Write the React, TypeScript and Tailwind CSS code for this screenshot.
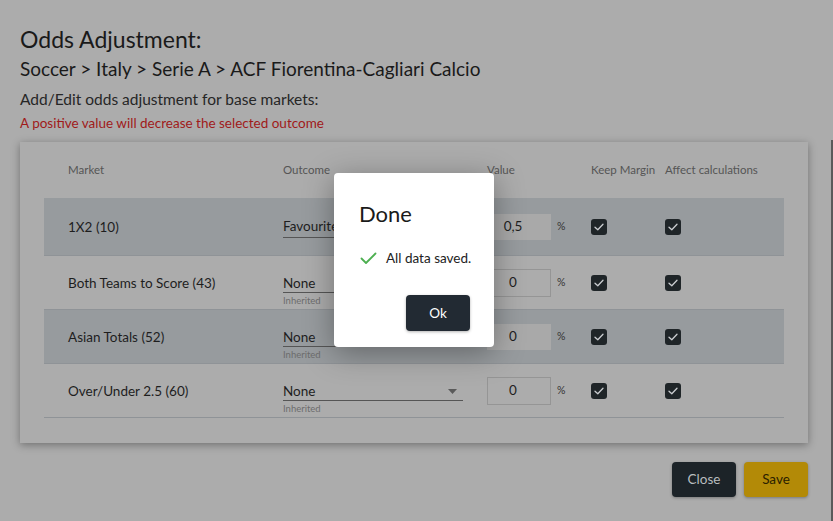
import React from "react";

const font = { fontFamily: "Lato, 'Noto Sans', sans-serif" };

function Check() {
  return (
    <div className="w-4 h-4 rounded-[3px] bg-[#1f2528] flex items-center justify-center">
      <svg width="10" height="8" viewBox="0 0 10 8" fill="none">
        <path d="M1 4.2 L3.8 6.8 L9 1.2" stroke="#c9cccf" strokeWidth="1.3" strokeLinecap="round" strokeLinejoin="round" />
      </svg>
    </div>
  );
}

type Row = { market: string; outcome: string; inherited: boolean; value: string; striped: boolean; h: string };

const rows: Row[] = [
  { market: "1X2 (10)", outcome: "Favourite", inherited: false, value: "0,5", striped: true, h: "h-[58px]" },
  { market: "Both Teams to Score (43)", outcome: "None", inherited: true, value: "0", striped: false, h: "h-[54px]" },
  { market: "Asian Totals (52)", outcome: "None", inherited: true, value: "0", striped: true, h: "h-[54px]" },
  { market: "Over/Under 2.5 (60)", outcome: "None", inherited: true, value: "0", striped: false, h: "h-[54px]" },
];

export default function App() {
  return (
    <div className="relative w-[833px] h-[521px] overflow-hidden bg-[#acacac] text-[#1c1c1c]" style={font}>
      <div className="absolute right-0 top-[140px] bottom-0 w-[2px] bg-[#5a5a5a]" />
      <div className="px-[20px] pt-[24px]">
        <div className="text-[23px] leading-[30px] text-[#1a1a1a]">Odds Adjustment:</div>
        <div className="text-[19px] leading-[24px] mt-[3px] text-[#1a1a1a]">Soccer &gt; Italy &gt; Serie A &gt; ACF Fiorentina-Cagliari Calcio</div>
        <div className="text-[15.5px] leading-[20px] mt-[8px] text-[#262626]">Add/Edit odds adjustment for base markets:</div>
        <div className="text-[13.5px] leading-[18px] mt-[5px] text-[#a01a1a]">A positive value will decrease the selected outcome</div>

        <div className="mt-[10px] w-[788px] h-[301px] bg-[#acacac] shadow-[0_2px_8px_rgba(0,0,0,0.35)] px-[24px]">
          <div className="grid grid-cols-[239px_204px_104px_74px_1fr] h-[56px] items-center text-[11.5px] text-[#555]">
            <div className="pl-[24px]">Market</div>
            <div>Outcome</div>
            <div>Value</div>
            <div>Keep Margin</div>
            <div>Affect calculations</div>
          </div>
          {rows.map((r, i) => (
            <div
              key={i}
              className={`grid grid-cols-[239px_204px_104px_74px_1fr] items-center border-b border-[#8f9397] ${r.h} ${r.striped ? "bg-[#979b9e]" : ""}`}
            >
              <div className={`pl-[24px] text-[13.5px] text-[#1e1e1e] ${r.inherited ? "mt-[1px]" : "mt-[2px]"}`}>{r.market}</div>
              <div className="relative">
                <div className={`w-[180px] flex items-center justify-between border-b border-[#555] ${r.inherited ? "h-[18px] mt-[3px]" : "h-[22px] mt-[1px]"}`}>
                  <span className="text-[13.5px] text-[#1e1e1e]">{r.outcome}</span>
                  <svg width="9" height="5" viewBox="0 0 9 5" className="mr-[6px]">
                    <path d="M0 0 L9 0 L4.5 5 Z" fill="#5a5a5a" />
                  </svg>
                </div>
                {r.inherited && (
                  <div className="absolute left-0 top-[22px] text-[9.5px] text-[#6c6c6c]">Inherited</div>
                )}
              </div>
              <div className="flex items-center">
                <div
                  className={`w-[64px] flex items-center justify-center pr-[12px] text-[13.5px] text-[#1e1e1e] ${r.striped ? "h-[26px] bg-[#a9a9a9]" : "h-[28px] border border-[#959595]"}`}
                >
                  {r.value}
                </div>
                <span className="ml-[6px] text-[10.5px] text-[#333]">%</span>
              </div>
              <div><Check /></div>
              <div><Check /></div>
            </div>
          ))}
        </div>

        <div className="flex justify-end gap-[8px] mt-[19px] w-[788px]">
          <div className="w-[64px] h-[35px] rounded-[4px] bg-[#1c2328] text-[#b8bcbf] text-[13.5px] flex items-center justify-center shadow-[0_1px_3px_rgba(0,0,0,0.3)]">Close</div>
          <div className="w-[64px] h-[35px] rounded-[4px] bg-[#b38a07] text-[#2a2100] text-[13.5px] flex items-center justify-center shadow-[0_1px_3px_rgba(0,0,0,0.3)]">Save</div>
        </div>
      </div>

      <div className="absolute left-[334px] top-[173px] w-[160px] h-[174px] bg-white rounded-[4px] shadow-[0_6px_30px_rgba(0,0,0,0.35)]">
        <div className="absolute left-[25px] top-[27px] text-[22px] leading-[28px] text-[#1a1a1a]">Done</div>
        <div className="absolute left-[26px] top-[75px] flex items-center">
          <svg width="17" height="13" viewBox="0 0 17 13" fill="none">
            <path d="M1.5 6.5 L6 11 L15.5 1.5" stroke="#4caf50" strokeWidth="1.8" strokeLinecap="round" strokeLinejoin="round" />
          </svg>
          <span className="ml-[9px] text-[13.5px] text-[#222]">All data saved.</span>
        </div>
        <div className="absolute left-[72px] top-[122px] w-[64px] h-[36px] rounded-[4px] bg-[#222a33] text-white text-[13.5px] flex items-center justify-center shadow-[0_1px_3px_rgba(0,0,0,0.3)]">Ok</div>
      </div>
    </div>
  );
}
